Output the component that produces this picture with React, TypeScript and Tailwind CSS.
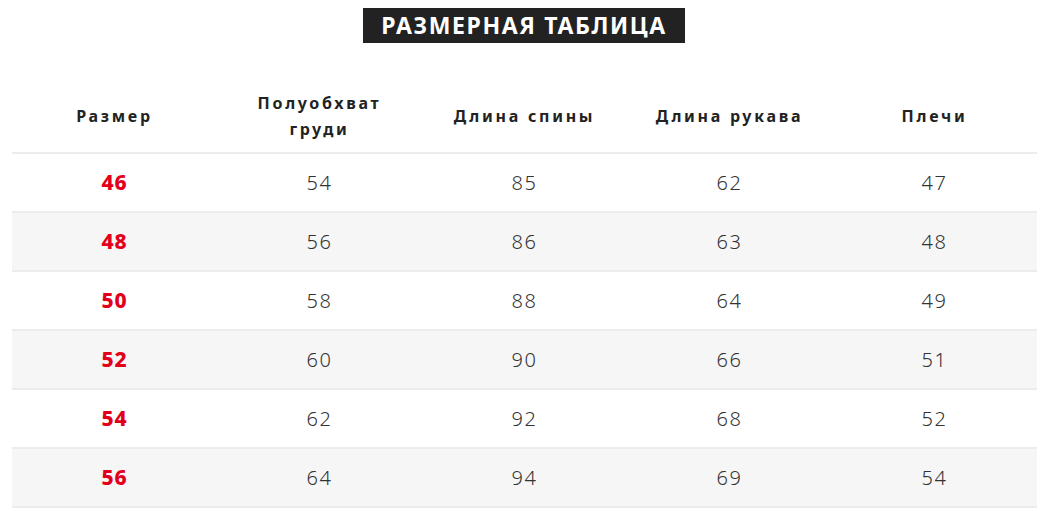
const rows = [
  ["46", "54", "85", "62", "47"],
  ["48", "56", "86", "63", "48"],
  ["50", "58", "88", "64", "49"],
  ["52", "60", "90", "66", "51"],
  ["54", "62", "92", "68", "52"],
  ["56", "64", "94", "69", "54"],
];

const headers = ["Размер", "Полуобхват груди", "Длина спины", "Длина рукава", "Плечи"];

export default function App() {
  return (
    <div
      className="w-[1048px] h-[528px] bg-white overflow-hidden"
      style={{ fontFamily: '"Noto Sans", "Open Sans", sans-serif' }}
    >
      <div className="flex justify-center pt-[8px]">
        <div className="bg-[#222222] text-white font-bold text-[23px] leading-[35px] h-[35px] px-[18px] uppercase tracking-[0.07em]">
          Размерная таблица
        </div>
      </div>

      <div className="mx-[12px] w-[1025px] mt-[37px]">
        <div className="grid grid-cols-5 h-[74px] items-center border-b-2 border-[#ececec]">
          {headers.map((h) => (
            <div
              key={h}
              className="text-center font-bold text-[16px] leading-[26px] tracking-[0.17em] text-[#222222] px-[22px]"
            >
              {h === "Полуобхват груди" ? (
                <>
                  Полуобхват
                  <br />
                  груди
                </>
              ) : (
                h
              )}
            </div>
          ))}
        </div>
        {rows.map((r, i) => (
          <div
            key={r[0]}
            className={`grid grid-cols-5 h-[59px] items-center border-b-2 border-[#ececec] ${
              i % 2 === 1 ? "bg-[#f6f6f6]" : "bg-white"
            }`}
          >
            {r.map((c, j) => (
              <div
                key={j}
                className={
                  j === 0
                    ? "text-center text-[21px] font-extrabold tracking-[0.04em] text-[#e2001a]"
                    : "text-center text-[20px] font-light tracking-[0.08em] text-[#333333]"
                }
              >
                {c}
              </div>
            ))}
          </div>
        ))}
      </div>
    </div>
  );
}
